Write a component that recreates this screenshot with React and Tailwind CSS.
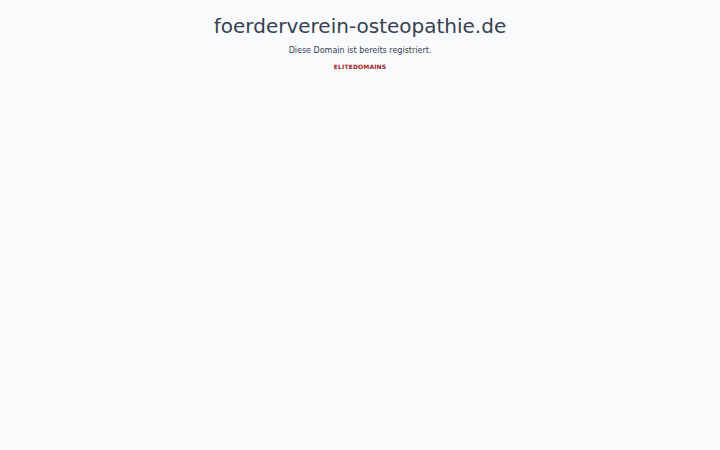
export default function App() {
  return (
    <div className="min-h-screen w-full bg-[#f9fafb] flex flex-col items-center text-[#374151]" style={{ fontFamily: '"DejaVu Sans", sans-serif' }}>
      <h1 className="text-[20px] leading-none mt-[16px]">foerderverein-osteopathie.de</h1>
      <p className="text-[8px] leading-none mt-[11px] text-[#374151]">Diese Domain ist bereits registriert.</p>
      <a className="text-[6px] font-bold leading-none mt-[9px] text-[#9b1c1c] tracking-wide">ELITEDOMAINS</a>
    </div>
  );
}
